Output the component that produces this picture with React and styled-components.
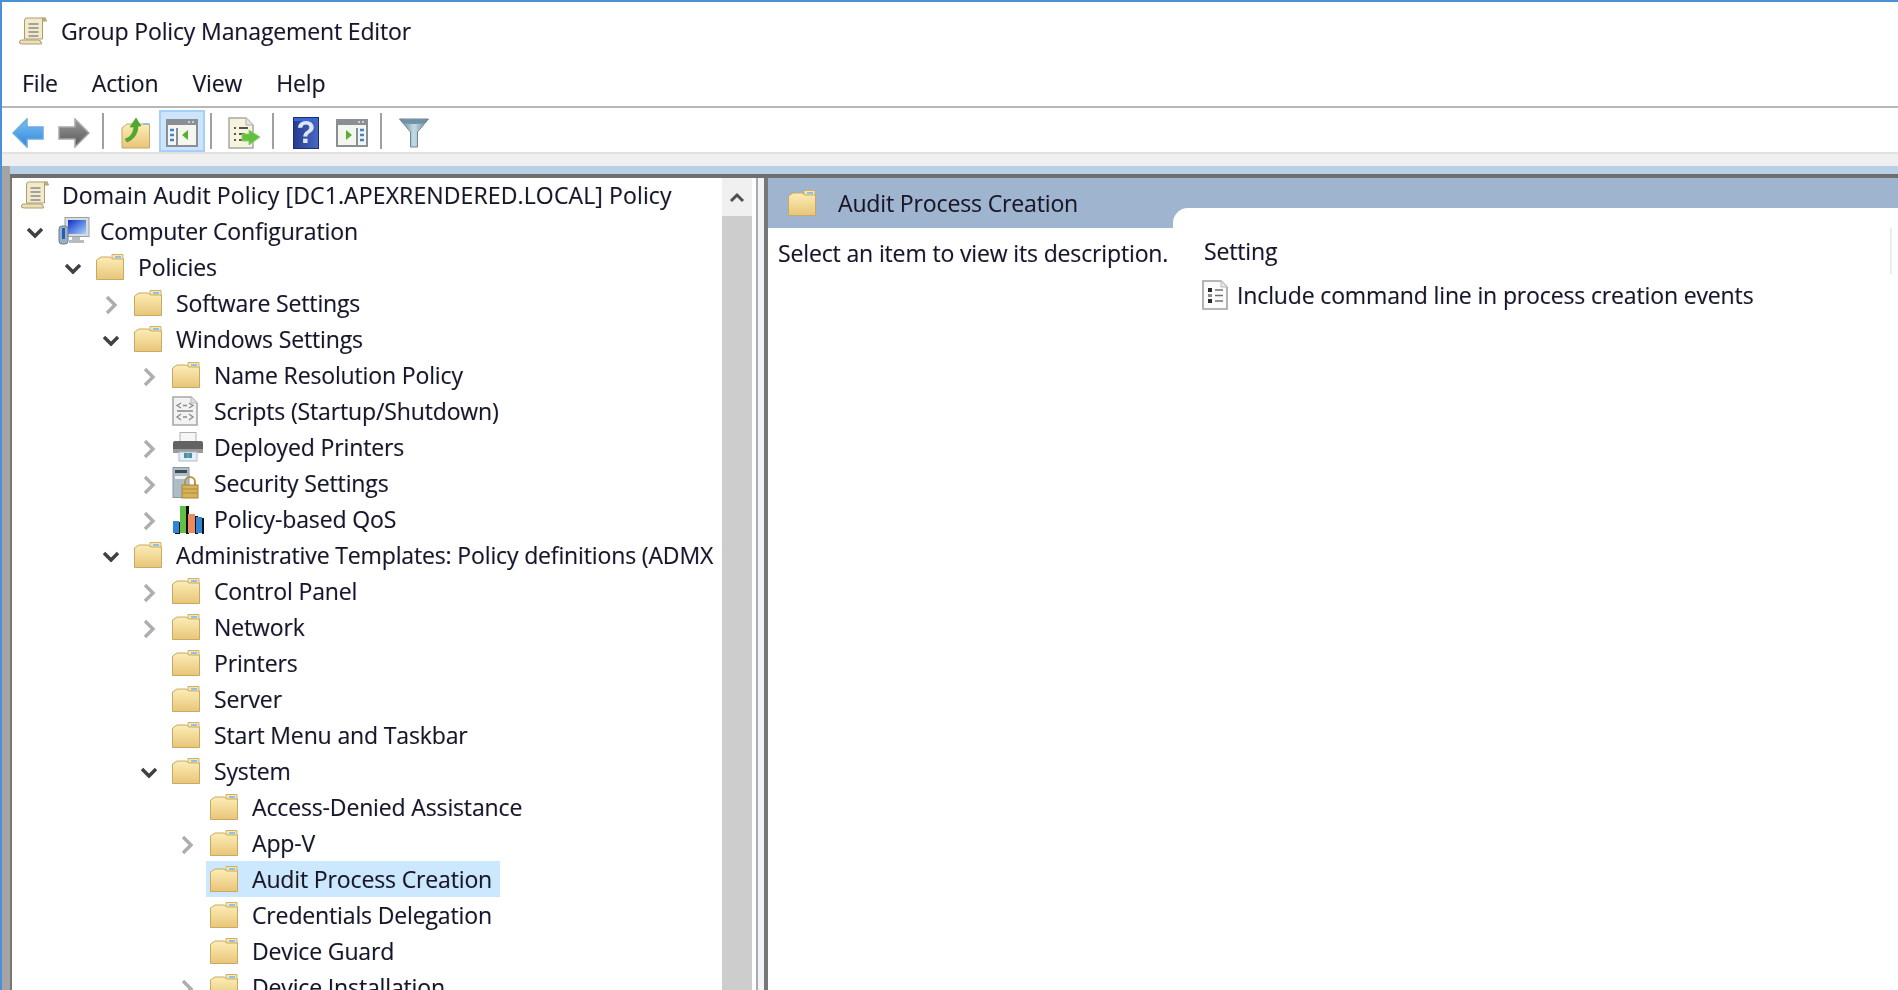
import React from "react";
import styled, { createGlobalStyle } from "styled-components";

const GlobalStyle = createGlobalStyle`
  html, body {
    margin: 0;
    height: 100%;
    overflow: hidden;
    background: #fff;
  }
  #root {
    height: 100%;
  }
`;

const Shell = styled.div`
  height: 100vh;
  box-sizing: border-box;
  display: flex;
  flex-direction: column;
  overflow: hidden;
  border-top: 2px solid #4a90d9;
  border-left: 2px solid #4a90d9;
  background: #fff;
  color: #16162a;
  font-family: "Open Sans", "Noto Sans", sans-serif;
  font-size: 23px;
  letter-spacing: -0.14px;
  text-shadow: -0.5px 0 rgba(255, 130, 0, 0.32), 0.5px 0 rgba(0, 120, 255, 0.32);
  filter: blur(0.4px);
`;

const TitleBar = styled.header`
  height: 58px;
  flex: none;
  display: flex;
  align-items: center;
  padding: 0 0 2px 16px;
  gap: 13px;
`;

const MenuBar = styled.nav`
  height: 42px;
  flex: none;
  display: flex;
  align-items: center;
  gap: 34px;
  padding: 0 0 2px 20px;
  border-bottom: 2px solid #b8b8b8;
`;

const MenuItem = styled.span``;

const Toolbar = styled.div`
  height: 44px;
  flex: none;
  display: flex;
  align-items: center;
  padding-left: 3px;
  border-bottom: 2px solid #e2e2e2;
`;

const ToolButton = styled.button`
  width: 46px;
  height: 42px;
  margin-top: 2px;
  padding: 4px 0 0;
  box-sizing: border-box;
  display: flex;
  align-items: center;
  justify-content: center;
  background: ${(p) => (p.$active ? "#cce4fc" : "transparent")};
  border: 2px solid ${(p) => (p.$active ? "#a6d0f7" : "transparent")};
`;

const ToolSeparator = styled.span`
  width: 2px;
  height: 36px;
  margin: 2px 9px 0 5px;
  background: #a0a0a0;
`;

const GreyStrip = styled.div`
  height: 12px;
  flex: none;
  background: #efefef;
`;

const Workspace = styled.div`
  flex: 1;
  min-height: 0;
  display: flex;
`;

const Gutter = styled.div`
  width: 8px;
  flex: none;
  background: #a4a4a4;
`;

const Main = styled.div`
  flex: 1;
  min-width: 0;
  display: flex;
  flex-direction: column;
`;

const Band = styled.div`
  height: 8px;
  flex: none;
  background: #b9cfe6;
`;

const Panes = styled.div`
  flex: 1;
  min-height: 0;
  display: flex;
  border-top: 4px solid #6f6f6f;
`;

const LeftPane = styled.section`
  width: 746px;
  flex: none;
  display: flex;
  box-sizing: border-box;
  border-left: 2px solid #777;
  padding-right: 4px;
  overflow: hidden;
`;

const Tree = styled.ul`
  flex: 1;
  min-width: 0;
  margin: -1px 0 0;
  padding: 0;
  list-style: none;
  overflow: hidden;
`;

const Row = styled.li`
  height: 36px;
  display: flex;
  align-items: center;
  white-space: nowrap;
  padding-left: ${(p) => (p.$root ? 8 : p.$level * 38 + 13)}px;
`;

const ExpanderSlot = styled.span`
  width: 20px;
  flex: none;
  margin-right: 13px;
  padding-top: 4px;
  display: flex;
  align-items: center;
  justify-content: center;
`;

const Node = styled.span`
  height: 36px;
  display: flex;
  align-items: center;
  margin-left: ${(p) => (p.$selected ? -4 : 0)}px;
  padding: 0 ${(p) => (p.$selected ? 8 : 0)}px 0 ${(p) => (p.$selected ? 4 : 0)}px;
  background: ${(p) => (p.$selected ? "#cce8ff" : "transparent")};
`;

const IconSlot = styled.span`
  width: 32px;
  flex: none;
  margin-right: 10px;
  display: flex;
  align-items: center;
`;

const RootLabel = styled.span`
  letter-spacing: 0.13px;
`;

const Scrollbar = styled.div`
  width: 30px;
  flex: none;
  display: flex;
  flex-direction: column;
  background: #cdcdcd;
`;

const ScrollButton = styled.div`
  height: 38px;
  display: flex;
  align-items: center;
  justify-content: center;
  background: #f0f0f0;
`;

const Splitter = styled.div`
  width: 12px;
  flex: none;
  box-sizing: border-box;
  background: #f3f3f3;
  border-left: 2px solid #a3adb8;
  border-right: 4px solid #777;
`;

const RightPane = styled.section`
  flex: 1;
  min-width: 0;
  display: flex;
  flex-direction: column;
`;

const PaneHeader = styled.div`
  flex: none;
  display: flex;
  height: 50px;
`;

const HeaderTab = styled.div`
  position: relative;
  width: 421px;
  flex: none;
  box-sizing: border-box;
  display: flex;
  align-items: center;
  gap: 22px;
  padding: 0 0 0 20px;
  background: #9fb4cf;

  &::after {
    content: "";
    position: absolute;
    right: 0;
    bottom: 0;
    width: 16px;
    height: 20px;
    background: #fff;
    border-top-left-radius: 15px;
  }
`;

const HeaderFill = styled.div`
  flex: 1;
  height: 30px;
  background: #9fb4cf;
`;

const PaneBody = styled.div`
  flex: 1;
  min-height: 0;
  display: flex;
`;

const Description = styled.div`
  width: 416px;
  flex: none;
  padding: 7px 0 0 10px;
  line-height: 36px;
  white-space: nowrap;
`;

const SettingsList = styled.div`
  flex: 1;
  min-width: 0;
  display: flex;
  flex-direction: column;
`;

const ListHeader = styled.div`
  height: 46px;
  flex: none;
  display: flex;
  align-items: center;
  justify-content: space-between;
  padding: 0 6px 0 10px;
`;

const HeaderHandle = styled.span`
  width: 2px;
  height: 46px;
  background: #ececec;
`;

const ListRow = styled.div`
  height: 42px;
  flex: none;
  display: flex;
  align-items: center;
  gap: 9px;
  padding-left: 8px;
  white-space: nowrap;
`;

function Defs() {
  return (
    <svg width="0" height="0" style={{ display: "block" }}>
      <defs>
        <linearGradient id="folderFace" x1="0" y1="0" x2="0" y2="1">
          <stop offset="0" stopColor="#fcedb6" />
          <stop offset="1" stopColor="#e8c579" />
        </linearGradient>
        <linearGradient id="blueArrow" x1="0" y1="0" x2="0" y2="1">
          <stop offset="0" stopColor="#7cc0f4" />
          <stop offset="1" stopColor="#2f86d8" />
        </linearGradient>
        <linearGradient id="greyArrow" x1="0" y1="0" x2="0" y2="1">
          <stop offset="0" stopColor="#9a9a9a" />
          <stop offset="1" stopColor="#585858" />
        </linearGradient>
        <linearGradient id="helpBlue" x1="0" y1="0" x2="1" y2="0">
          <stop offset="0" stopColor="#243c8c" />
          <stop offset="1" stopColor="#4a68c4" />
        </linearGradient>
        <linearGradient id="screenBlue" x1="0" y1="0" x2="1" y2="1">
          <stop offset="0" stopColor="#0a2fc8" />
          <stop offset="1" stopColor="#a8d4f8" />
        </linearGradient>
        <linearGradient id="funnel" x1="0" y1="0" x2="1" y2="0">
          <stop offset="0" stopColor="#5f7c8c" />
          <stop offset="0.5" stopColor="#c4dce8" />
          <stop offset="1" stopColor="#60808f" />
        </linearGradient>
      </defs>
    </svg>
  );
}

function Folder() {
  return (
    <svg width="28" height="26" viewBox="0 0 28 26">
      <path d="M16 0.5H27V8H16Z" fill="#f7e7b0" stroke="#cfb06a" />
      <path d="M19 2h6v2h-6z" fill="#8cc2ea" />
      <path d="M0.5 6L5 3H14L17 5H27.5V25.5H0.5Z" fill="url(#folderFace)" stroke="#c9a860" />
    </svg>
  );
}

function PolicyScroll() {
  return (
    <svg width="30" height="30" viewBox="0 0 29 30">
      <path d="M8 2H27L24 4V23H6V5Q6 2 8 2Z" fill="#f3ebc8" stroke="#a99c74" />
      <path d="M24 2q4 0 4 3h-4z" fill="#d6b56a" stroke="#a99c74" />
      <path d="M10 8h10M10 12h10M10 16h10M10 20h10" stroke="#8a8a94" strokeWidth="1.6" />
      <path d="M3 24H20Q23 24 23 28H4Q0 28 1 26Q1 24 3 24Z" fill="#ece0b4" stroke="#a99c74" />
    </svg>
  );
}

function Computer() {
  return (
    <svg width="32" height="28" viewBox="0 0 32 28">
      <rect x="7" y="0.5" width="24" height="19" fill="#d8dce0" stroke="#9aa0a6" />
      <rect x="10" y="3" width="18" height="14" fill="url(#screenBlue)" />
      <path d="M14 20h8v3h4v3H11v-3h3z" fill="#b8bcc0" />
      <rect x="1" y="9" width="9" height="18" rx="3" fill="#9cb0c4" stroke="#6a7c90" />
      <rect x="4" y="11" width="3" height="11" fill="#1f5fb8" />
    </svg>
  );
}

function ScriptDoc() {
  return (
    <svg width="26" height="30" viewBox="0 0 26 30">
      <path d="M1 1H19L25 7V29H1Z" fill="#f2f2f2" stroke="#a8a8a8" strokeWidth="1.6" />
      <path d="M19 1V7H25" fill="#e0e0e0" stroke="#b8b8b8" />
      <path d="M9 7L5 9.5L9 12M17 7L21 9.5L17 12M11 9.5h4M5 15h16M9 18L5 21L9 24M17 18L21 21L17 24M11 21h4" fill="none" stroke="#8a8a8a" strokeWidth="1.3" />
    </svg>
  );
}

function Printer() {
  return (
    <svg width="32" height="30" viewBox="0 0 32 30">
      <rect x="8" y="0.5" width="16" height="10" fill="#f5f5f5" stroke="#b0b0b0" />
      <rect x="1" y="9" width="30" height="11" rx="2" fill="#636363" />
      <rect x="1" y="17" width="30" height="4" fill="#9a9a9a" />
      <rect x="7" y="20" width="18" height="9" fill="#e8eef6" stroke="#a8bcd4" />
      <rect x="12" y="21" width="8" height="5" fill="#4c8cb8" />
      <rect x="15" y="21" width="2" height="5" fill="#6cb06c" />
    </svg>
  );
}

function ServerLock() {
  return (
    <svg width="28" height="32" viewBox="0 0 28 32">
      <rect x="1" y="0.5" width="16" height="30" fill="#aebcc8" stroke="#8a98a4" />
      <rect x="3" y="3" width="12" height="3" fill="#3e4a54" />
      <rect x="3" y="9" width="12" height="3" fill="#eef2f4" />
      <path d="M13 17v-3a5 5 0 0 1 10 0v3" fill="none" stroke="#b89644" strokeWidth="2" transform="translate(0 1)" />
      <rect x="10" y="18" width="16" height="13" fill="#d8b25a" stroke="#a88634" />
      <path d="M10 22h16M10 26h16" stroke="#b08c3c" />
    </svg>
  );
}

function BarChart() {
  return (
    <svg width="32" height="30" viewBox="0 0 32 30">
      <path d="M3 18h5v12H3zM14 2h3v28h-3zM23 12h3v18h-3zM30 14h2v16h-2z" fill="#111" />
      <rect x="1" y="17" width="6" height="12" fill="#2f86d8" />
      <rect x="8" y="2" width="6" height="27" fill="#62c048" />
      <rect x="16" y="10" width="7" height="19" fill="#ee8a62" />
      <rect x="24" y="13" width="6" height="16" fill="#2f86d8" />
    </svg>
  );
}

function BackArrow() {
  return (
    <svg width="32" height="30" viewBox="0 0 32 30">
      <path d="M15 1L1 15L15 29V21H31V9H15Z" fill="url(#blueArrow)" stroke="#6aa8e0" strokeWidth="1.5" />
    </svg>
  );
}

function ForwardArrow() {
  return (
    <svg width="32" height="30" viewBox="0 0 32 30">
      <path d="M17 1L31 15L17 29V21H1V9H17Z" fill="url(#greyArrow)" stroke="#a8a8a8" strokeWidth="1.5" />
    </svg>
  );
}

function UpFolder() {
  return (
    <svg width="30" height="32" viewBox="0 0 30 32">
      <path d="M1 11L6 7H28.5V31H1Z" fill="url(#folderFace)" stroke="#c9a860" />
      <path d="M22 6h6v2h-6z" fill="#8cc2ea" />
      <path d="M4 22C10 20 12 16 13 10L9 10L15 1L20 9L17 9C17 15 14 22 6 25Z" fill="#4fa830" stroke="#3f9a26" strokeWidth="0.6" />
    </svg>
  );
}

function PaneWindow({ flip }) {
  return (
    <svg width="32" height="28" viewBox="0 0 32 28">
      <rect x="1" y="1" width="30" height="26" fill="#f4f6f0" stroke="#8a8f96" strokeWidth="2" />
      <rect x="1" y="1" width="30" height="5" fill="#8a8f96" />
      <path d="M22 3h2M26 3h2" stroke="#e8e8e8" strokeWidth="1.5" />
      {flip ? (
        <>
          <path d="M21 9v17" stroke="#8a8f96" strokeWidth="2" />
          <path d="M24 11h4M24 16h4M24 21h4" stroke="#4a80c8" strokeWidth="2.4" />
          <path d="M10 11L16 16L10 21Z" fill="#58b030" />
        </>
      ) : (
        <>
          <path d="M11 9v17" stroke="#8a8f96" strokeWidth="2" />
          <path d="M4 11h4M4 16h4M4 21h4" stroke="#4a80c8" strokeWidth="2.4" />
          <path d="M22 11L16 16L22 21Z" fill="#58b030" />
        </>
      )}
    </svg>
  );
}

function ExportList() {
  return (
    <svg width="32" height="32" viewBox="0 0 32 32">
      <path d="M1 1H18L25 8V31H1Z" fill="#f7f3dc" stroke="#a8a8a8" strokeWidth="1.5" />
      <path d="M18 1V8H25" fill="#e4e4e4" stroke="#b0b0b0" />
      <path d="M6 11h2M11 11h9M6 17h2M11 17h6M6 23h2M11 23h6" stroke="#555" strokeWidth="2" />
      <path d="M21 13L32 20L21 28V24H14V17H21Z" fill="#62c040" stroke="#8ed070" />
    </svg>
  );
}

function HelpBook() {
  return (
    <svg width="26" height="32" viewBox="0 0 26 32">
      <rect x="0.5" y="0.5" width="25" height="31" fill="url(#helpBlue)" stroke="#1c2e70" />
      <rect x="1" y="1" width="24" height="3" fill="#3868d8" />
    </svg>
  );
}

const HelpMark = styled.span`
  position: absolute;
  left: 0;
  right: 0;
  top: 0;
  text-align: center;
  font-family: "Liberation Sans", sans-serif;
  font-weight: bold;
  font-size: 31px;
  line-height: 32px;
  letter-spacing: 0;
  color: #dfe6f8;
  text-shadow: none;
`;

const HelpIcon = styled.span`
  position: relative;
  width: 26px;
  height: 32px;
  display: block;
`;

function Funnel() {
  return (
    <svg width="30" height="30" viewBox="0 0 30 30">
      <path d="M0.5 1H29.5L18.5 14V29H11.5V14Z" fill="url(#funnel)" stroke="#6f8794" />
      <ellipse cx="15" cy="3.5" rx="13" ry="2.6" fill="#6f92a4" />
    </svg>
  );
}

function SettingIcon() {
  return (
    <svg width="26" height="30" viewBox="0 0 26 30">
      <path d="M1 1H19L25 7V29H1Z" fill="#fbfbfb" stroke="#a0a0a0" strokeWidth="1.6" />
      <path d="M19 1V7H25" fill="#e8e8e8" stroke="#b8b8b8" />
      <path d="M6 8h4v4H6zM6 19h4v4H6z" fill="#2a2a2a" />
      <path d="M6 14h4v3H6z" fill="#8a8a96" />
      <path d="M13 10h8M13 15.500h8M13 21h8" stroke="#707078" strokeWidth="1.6" />
    </svg>
  );
}

function Chevron({ dir }) {
  if (dir === "open") {
    return (
      <svg width="18" height="12" viewBox="0 0 18 12">
        <path d="M2 2L9 9L16 2" fill="none" stroke="#404040" strokeWidth="3.4" />
      </svg>
    );
  }
  if (dir === "closed") {
    return (
      <svg width="13" height="20" viewBox="0 0 13 20">
        <path d="M2 2L10 10L2 18" fill="none" stroke="#aeaeae" strokeWidth="3.4" />
      </svg>
    );
  }
  return null;
}

const icons = {
  folder: <Folder />,
  computer: <Computer />,
  script: <ScriptDoc />,
  printer: <Printer />,
  lock: <ServerLock />,
  chart: <BarChart />,
};

const treeRows = [
  { level: 0, dir: "open", icon: "computer", label: "Computer Configuration" },
  { level: 1, dir: "open", icon: "folder", label: "Policies" },
  { level: 2, dir: "closed", icon: "folder", label: "Software Settings" },
  { level: 2, dir: "open", icon: "folder", label: "Windows Settings" },
  { level: 3, dir: "closed", icon: "folder", label: "Name Resolution Policy" },
  { level: 3, icon: "script", label: "Scripts (Startup/Shutdown)" },
  { level: 3, dir: "closed", icon: "printer", label: "Deployed Printers" },
  { level: 3, dir: "closed", icon: "lock", label: "Security Settings" },
  { level: 3, dir: "closed", icon: "chart", label: "Policy-based QoS" },
  { level: 2, dir: "open", icon: "folder", label: "Administrative Templates: Policy definitions (ADMX" },
  { level: 3, dir: "closed", icon: "folder", label: "Control Panel" },
  { level: 3, dir: "closed", icon: "folder", label: "Network" },
  { level: 3, icon: "folder", label: "Printers" },
  { level: 3, icon: "folder", label: "Server" },
  { level: 3, icon: "folder", label: "Start Menu and Taskbar" },
  { level: 3, dir: "open", icon: "folder", label: "System" },
  { level: 4, icon: "folder", label: "Access-Denied Assistance" },
  { level: 4, dir: "closed", icon: "folder", label: "App-V" },
  { level: 4, icon: "folder", label: "Audit Process Creation", selected: true },
  { level: 4, icon: "folder", label: "Credentials Delegation" },
  { level: 4, icon: "folder", label: "Device Guard" },
  { level: 4, dir: "closed", icon: "folder", label: "Device Installation" },
];

export default function App() {
  return (
    <>
      <GlobalStyle />
      <Shell>
        <Defs />
        <TitleBar>
          <PolicyScroll />
          <span>Group Policy Management Editor</span>
        </TitleBar>
        <MenuBar>
          <MenuItem>File</MenuItem>
          <MenuItem>Action</MenuItem>
          <MenuItem>View</MenuItem>
          <MenuItem>Help</MenuItem>
        </MenuBar>
        <Toolbar>
          <ToolButton><BackArrow /></ToolButton>
          <ToolButton><ForwardArrow /></ToolButton>
          <ToolSeparator />
          <ToolButton><UpFolder /></ToolButton>
          <ToolButton $active><PaneWindow /></ToolButton>
          <ToolSeparator />
          <ToolButton><ExportList /></ToolButton>
          <ToolSeparator />
          <ToolButton>
            <HelpIcon>
              <HelpBook />
              <HelpMark>?</HelpMark>
            </HelpIcon>
          </ToolButton>
          <ToolButton><PaneWindow flip /></ToolButton>
          <ToolSeparator />
          <ToolButton><Funnel /></ToolButton>
        </Toolbar>
        <GreyStrip />
        <Workspace>
          <Gutter />
          <Main>
            <Band />
            <Panes>
              <LeftPane>
                <Tree>
                  <Row $root>
                    <Node>
                      <IconSlot><PolicyScroll /></IconSlot>
                      <RootLabel>Domain Audit Policy [DC1.APEXRENDERED.LOCAL] Policy</RootLabel>
                    </Node>
                  </Row>
                  {treeRows.map((row) => (
                    <Row key={row.label} $level={row.level}>
                      <ExpanderSlot><Chevron dir={row.dir} /></ExpanderSlot>
                      <Node $selected={row.selected}>
                        <IconSlot>{icons[row.icon]}</IconSlot>
                        <span>{row.label}</span>
                      </Node>
                    </Row>
                  ))}
                </Tree>
                <Scrollbar>
                  <ScrollButton>
                    <svg width="16" height="11" viewBox="0 0 16 11">
                      <path d="M2 9L8 3L14 9" fill="none" stroke="#505050" strokeWidth="3" />
                    </svg>
                  </ScrollButton>
                </Scrollbar>
              </LeftPane>
              <Splitter />
              <RightPane>
                <PaneHeader>
                  <HeaderTab>
                    <Folder />
                    <span>Audit Process Creation</span>
                  </HeaderTab>
                  <HeaderFill />
                </PaneHeader>
                <PaneBody>
                  <Description>Select an item to view its description.</Description>
                  <SettingsList>
                    <ListHeader>
                      <span>Setting</span>
                      <HeaderHandle />
                    </ListHeader>
                    <ListRow>
                      <SettingIcon />
                      <span>Include command line in process creation events</span>
                    </ListRow>
                  </SettingsList>
                </PaneBody>
              </RightPane>
            </Panes>
          </Main>
        </Workspace>
      </Shell>
    </>
  );
}
